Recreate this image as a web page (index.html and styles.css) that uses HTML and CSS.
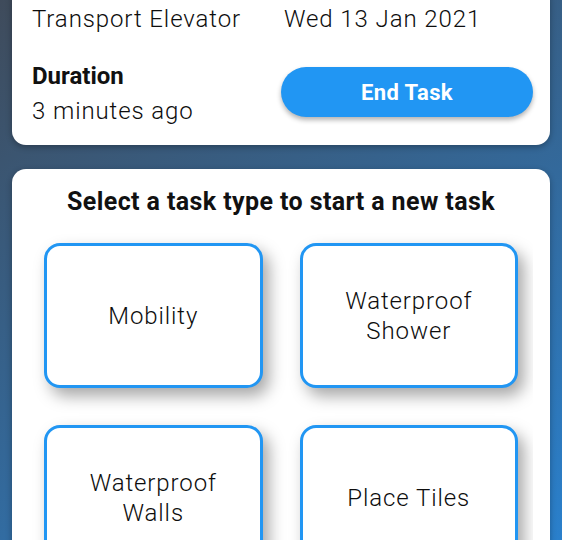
FILE: index.html
```html
<!DOCTYPE html>
<html>
<head>
    <title>Tasks</title>
    <link rel="stylesheet" href="styles.css">
</head>
<body>
    <div class="screen">
        <div class="card current-task">
            <div class="task-name">Transport Elevator</div>
            <div class="task-date">Wed 13 Jan 2021</div>
            <div class="duration">
                <div class="label">Duration</div>
                <div class="value">3 minutes ago</div>
            </div>
            <button class="end-task">End Task</button>
        </div>
        <div class="card new-task">
            <h2>Select a task type to start a new task</h2>
            <div class="task-types">
                <div class="tile">Mobility</div>
                <div class="tile">Waterproof<br>Shower</div>
                <div class="tile">Waterproof<br>Walls</div>
                <div class="tile">Place Tiles</div>
            </div>
        </div>
    </div>
</body>
</html>
```

FILE: styles.css
```css
html, body { margin: 0; height: 100%; }
body {
    font-family: Roboto, "Liberation Sans", sans-serif;
    font-weight: 300;
    letter-spacing: 0.9px;
    color: #0d0d0d;
    background: linear-gradient(150deg, #3f4b5b 0%, #2a80cc 100%);
    overflow: hidden;
}
.screen { display: flex; flex-direction: column; gap: 24px; padding: 0 12px; }
.card {
    background: #fff;
    border-radius: 14px;
    box-shadow: 0 2px 6px rgba(0,0,0,0.3);
}

/* current task card (scrolled, top is off screen) */
.current-task {
    margin-top: -14px;
    padding: 19px 17px 20px 20px;
    display: grid;
    grid-template-columns: 249px 1fr;
    row-gap: 29px;
    align-items: center;
    font-size: 24px;
    line-height: 28px;
}
.task-date { padding-left: 3px; }
.duration .label { font-weight: 700; letter-spacing: 0; color: #111; }
.duration .value { margin-top: 7px; }
.end-task {
    height: 50px;
    margin-top: -3px;
    border: none;
    border-radius: 25px;
    background: #2196f3;
    color: #fff;
    font-family: inherit;
    font-size: 22px;
    font-weight: 700;
    letter-spacing: 0.4px;
    box-shadow: 0 3px 5px rgba(0,0,0,0.3);
    cursor: pointer;
}

/* new task card */
.new-task { padding: 19px 17px 40px; }
.new-task h2 {
    margin: 0 0 12px;
    text-align: center;
    font-size: 25px;
    line-height: 28px;
    font-weight: 700;
    letter-spacing: 0.4px;
    color: #111;
}
.task-types {
    display: grid;
    grid-template-columns: 1fr 1fr;
    gap: 37px;
    padding: 15px;
    overflow: hidden;
}
.tile {
    height: 145px;
    box-sizing: border-box;
    border: 3px solid #2196f3;
    border-radius: 16px;
    background: #fff;
    box-shadow: 6px 8px 16px rgba(0,0,0,0.35);
    display: flex;
    align-items: center;
    justify-content: center;
    text-align: center;
    font-size: 24px;
    line-height: 30px;
}
```
